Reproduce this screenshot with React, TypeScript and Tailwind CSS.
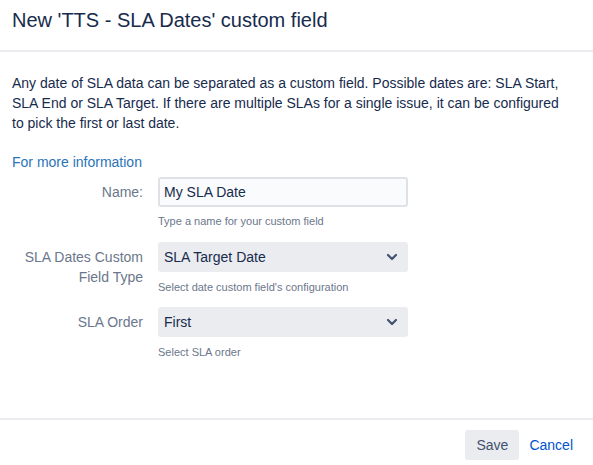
import React from "react";

function Chevron() {
  return (
    <svg width="12" height="8" viewBox="0 0 12 8" className="shrink-0">
      <path d="M2 2 L6 6 L10 2" fill="none" stroke="#42526e" strokeWidth="2.2" strokeLinecap="round" strokeLinejoin="round" />
    </svg>
  );
}

function Select({ value }: { value: string }) {
  return (
    <div className="w-[250px] h-[30px] rounded-[3px] bg-[#ebecf0] flex items-center justify-between pl-[6px] pr-[10px] text-[14px] text-[#172b4d]">
      <span>{value}</span>
      <Chevron />
    </div>
  );
}

export default function App() {
  return (
    <div
      className="w-[593px] h-[465px] bg-white flex flex-col text-[#172b4d]"
      style={{ fontFamily: '"Liberation Sans", Arial, sans-serif' }}
    >
      <div className="h-[44px] pt-[6px] px-[12px] border-b-2 border-[#ebecf0] box-content shrink-0">
        <h1 className="text-[20px] leading-[28px] font-normal text-[#172b4d]">New 'TTS - SLA Dates' custom field</h1>
      </div>
      <div className="flex-1 px-[12px] pt-[21px]">
        <p className="text-[14px] leading-[20px] text-[#172b4d] pr-[8px]">
          Any date of SLA data can be separated as a custom field. Possible dates are: SLA Start, SLA End or SLA Target. If there are multiple SLAs for a single issue, it can be configured to pick the first or last date.
        </p>
        <div className="mt-[19px] text-[14px] leading-[20px] text-[#2a74b8]">For more information</div>

        <div className="mt-[5px] flex gap-[15px]">
          <div className="w-[131px] text-right text-[14px] leading-[20px] pt-[5px] text-[#6b778c]">Name:</div>
          <div className="flex flex-col">
            <div className="w-[250px] h-[30px] rounded-[3px] bg-[#fafbfc] border-2 border-[#dfe1e6] flex items-center pl-[4px] text-[14px] text-[#172b4d]">
              My SLA Date
            </div>
            <div className="mt-[7px] text-[11px] leading-[14px] text-[#6b778c]">Type a name for your custom field</div>
          </div>
        </div>

        <div className="mt-[14px] flex gap-[15px]">
          <div className="w-[131px] text-right text-[14px] leading-[20px] pt-[5px] text-[#6b778c]">SLA Dates Custom Field Type</div>
          <div className="flex flex-col">
            <Select value="SLA Target Date" />
            <div className="mt-[8px] text-[11px] leading-[14px] text-[#6b778c]">Select date custom field's configuration</div>
          </div>
        </div>

        <div className="mt-[13px] flex gap-[15px]">
          <div className="w-[131px] text-right text-[14px] leading-[20px] pt-[5px] text-[#6b778c]">SLA Order</div>
          <div className="flex flex-col">
            <Select value="First" />
            <div className="mt-[8px] text-[11px] leading-[14px] text-[#6b778c]">Select SLA order</div>
          </div>
        </div>
      </div>
      <div className="h-[35px] shrink-0 border-t-2 border-[#ebecf0] box-content flex items-start justify-end pt-[10px] pr-[20px] gap-[10px]">
        <div className="h-[30px] px-[11px] rounded-[3px] bg-[#ebecf0] flex items-center text-[14px] text-[#42526e]">Save</div>
        <div className="h-[30px] flex items-center text-[14px] text-[#0052cc]">Cancel</div>
      </div>
    </div>
  );
}
